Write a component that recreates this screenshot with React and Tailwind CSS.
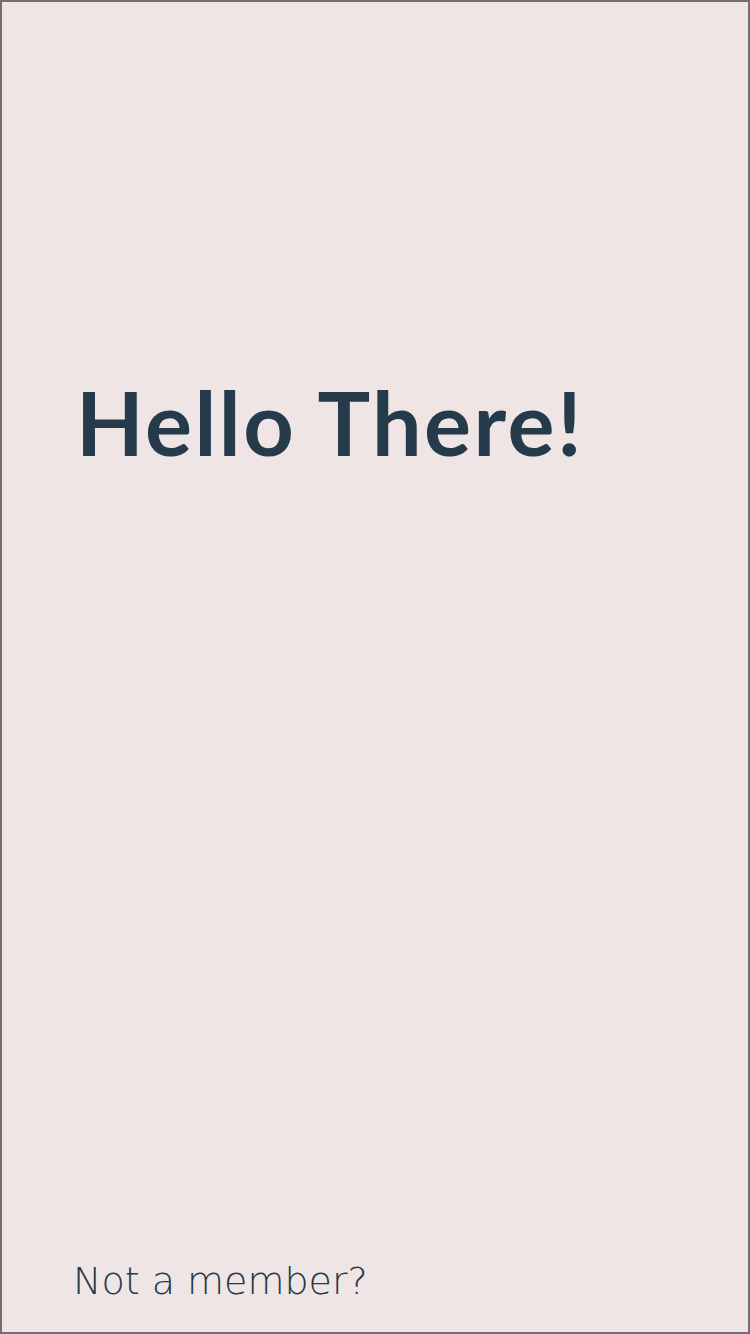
export default function App() {
  return (
    <div className="w-[750px] h-[1334px] bg-[#efe5e4] border-2 border-[#707070] flex flex-col text-[#253a4b]">
      <div className="pt-[376px] pl-[74px]">
        <h1 className="font-['Lato',sans-serif] font-bold text-[88px] leading-none tracking-[2.5px]">Hello There!</h1>
      </div>
      <div className="mt-auto pl-[71px] pb-[32px]">
        <p className="font-['DejaVu_Sans',sans-serif] font-extralight text-[38px] leading-none">Not a member?</p>
      </div>
    </div>
  );
}
